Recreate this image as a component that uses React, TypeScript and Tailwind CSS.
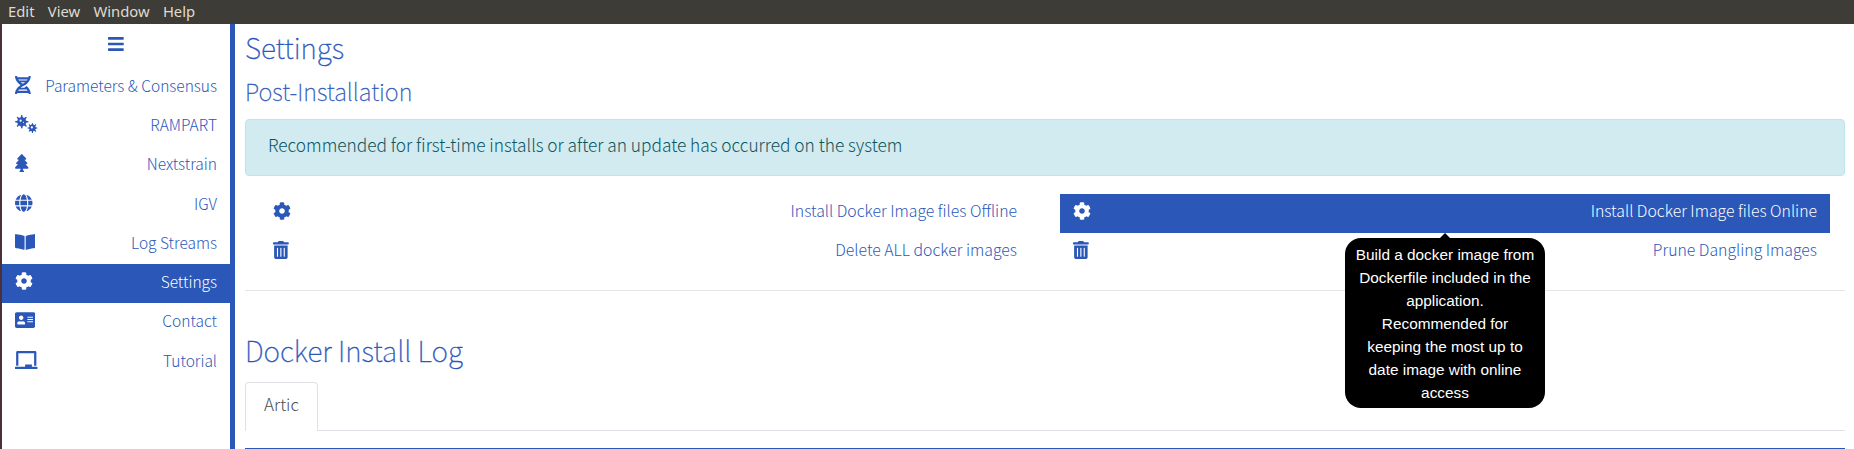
import type { ReactNode } from "react";
import {
  FaAddressCard,
  FaBars,
  FaBookOpen,
  FaChalkboard,
  FaCog,
  FaDna,
  FaGlobe,
  FaTrashAlt,
  FaTree,
  FaViruses,
} from "react-icons/fa";

interface NavEntry {
  label: string;
  icon: ReactNode;
  active?: boolean;
}

const navEntries: NavEntry[] = [
  { label: "Parameters & Consensus", icon: <FaDna className="h-[18px] w-[15.75px]" /> },
  { label: "RAMPART", icon: <FaViruses className="h-[18px] w-[22.5px]" /> },
  { label: "Nextstrain", icon: <FaTree className="h-[18px] w-[13.5px]" /> },
  { label: "IGV", icon: <FaGlobe className="h-[18px] w-[17.5px]" /> },
  { label: "Log Streams", icon: <FaBookOpen className="h-[18px] w-[20.25px]" /> },
  { label: "Settings", icon: <FaCog className="h-[18px] w-[18px]" />, active: true },
  { label: "Contact", icon: <FaAddressCard className="h-[18px] w-[20.25px]" /> },
  { label: "Tutorial", icon: <FaChalkboard className="h-[18px] w-[22.5px]" /> },
];

function MenuBar() {
  return (
    <header className="flex h-6 shrink-0 items-center gap-[13.3px] bg-[#3e3c37] pb-0.5 pl-2 font-['Noto_Sans',sans-serif] text-[14.8px] leading-5 font-normal text-[#dfdbd2]">
      <span>Edit</span>
      <span>View</span>
      <span>Window</span>
      <span>Help</span>
    </header>
  );
}

function Row({ entry, size }: { entry: NavEntry; size: string }) {
  return (
    <div
      className={`flex h-[39.25px] items-center justify-between px-[13px] pb-[5px] leading-[34px] ${size} ${
        entry.active ? "bg-[#2b57b9] text-white" : "text-[#2b57b9]"
      }`}
    >
      {entry.icon}
      <span>{entry.label}</span>
    </div>
  );
}

function Sidebar() {
  return (
    <nav className="w-[235px] shrink-0 border-r-[5px] border-l-2 border-r-[#2b57b9] border-l-[#4a303a]">
      <div className="flex h-[43.75px] justify-center pt-[10.5px] text-[#2b57b9]">
        <FaBars className="h-[18px] w-[15.75px]" />
      </div>
      {navEntries.map((entry) => (
        <Row key={entry.label} entry={entry} size="text-[15.5px]" />
      ))}
    </nav>
  );
}

function Tooltip() {
  return (
    <div className="absolute top-[44px] left-1/2 z-10 w-[200px] -translate-x-1/2 rounded-2xl bg-black px-2.5 pt-[5px] pb-1 text-center font-['Liberation_Sans',sans-serif] text-[15.36px] leading-[23px] font-normal text-white">
      <div className="absolute -top-[5px] left-1/2 -translate-x-1/2 border-x-[5px] border-b-[5px] border-x-transparent border-b-black" />
      Build a docker image from Dockerfile included in the application. Recommended for keeping the most up to date
      image with online access
    </div>
  );
}

function Actions() {
  const size = "text-[15.8px]";
  const cog = <FaCog className="h-[18px] w-[18px]" />;
  const trash = <FaTrashAlt className="h-[18px] w-[15.75px]" />;
  return (
    <div className="mt-[18px] grid grid-cols-2 gap-x-[30px] px-[15px]">
      <Row size={size} entry={{ label: "Install Docker Image files Offline", icon: cog }} />
      <div className="relative">
        <Row size={size} entry={{ label: "Install Docker Image files Online", icon: cog, active: true }} />
        <Tooltip />
      </div>
      <Row size={size} entry={{ label: "Delete ALL docker images", icon: trash }} />
      <Row size={size} entry={{ label: "Prune Dangling Images", icon: trash }} />
    </div>
  );
}

export default function App() {
  return (
    <div className="flex h-[449px] flex-col overflow-hidden bg-white font-['Noto_Sans_CJK_SC',sans-serif] font-light">
      <MenuBar />
      <div className="flex min-h-0 flex-1">
        <Sidebar />
        <main className="min-w-0 flex-1 pr-[9px] pl-2.5">
          <h1 className="h-[46px] text-[28.1px] leading-[46px] font-thin text-[#2b57b9] [-webkit-text-stroke:0.35px]">
            Settings
          </h1>
          <h2 className="h-[49px] text-[23.6px] leading-[42px] font-thin text-[#2b57b9] [-webkit-text-stroke:0.3px]">
            Post-Installation
          </h2>
          <div className="h-[57px] rounded border border-[#bee5eb] bg-[#d1ebf0] pl-[22px] text-[17.28px] leading-[50px] text-[#0c5460]">
            Recommended for first-time installs or after an update has occurred on the system
          </div>
          <Actions />
          <hr className="mt-[17.5px] border-[#e5e5e5]" />
          <h1 className="mt-9 h-[55px] text-[28.1px] leading-[46px] font-thin text-[#2b57b9] [-webkit-text-stroke:0.35px]">
            Docker Install Log
          </h1>
          <div className="flex h-[49px] border-b border-[#dee2e6]">
            <div className="-mb-px w-[73px] rounded-t border border-b-0 border-[#dee2e6] bg-white text-center text-[17px] leading-[41px] text-[#495057]">
              Artic
            </div>
          </div>
          <div className="mt-[17px] h-2 bg-[#2b57b9]" />
        </main>
      </div>
    </div>
  );
}
